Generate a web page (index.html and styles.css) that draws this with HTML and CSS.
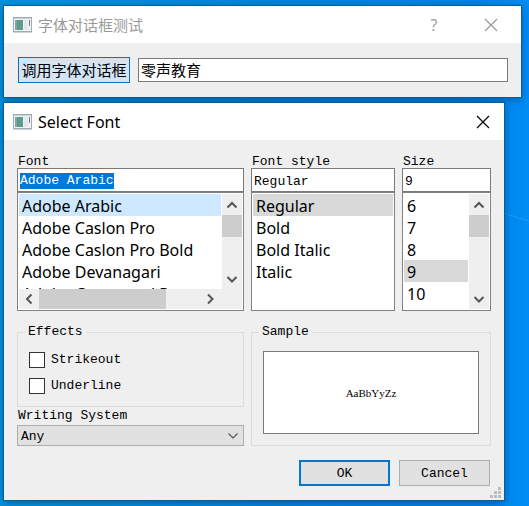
FILE: index.html
```html
<!DOCTYPE html>
<html lang="zh-CN">
<head>
<meta charset="utf-8">
<title>字体对话框测试</title>
<link rel="stylesheet" href="styles.css">
</head>
<body>
<svg class="defs" width="0" height="0" aria-hidden="true">
  <symbol id="app" viewBox="0 0 19 16">
    <rect x="0.5" y="0.5" width="18" height="14" fill="#f1f3f4" stroke="#a3adb1"/>
    <rect x="1" y="1" width="17" height="1" fill="#c3d0d8"/>
    <rect x="2" y="3" width="8" height="10" fill="#5a9d8b"/>
    <rect x="2" y="3" width="2" height="10" fill="#7ba6b0"/>
    <rect x="11" y="3" width="4" height="10" fill="#e4e7ec"/>
    <rect x="16" y="3" width="1" height="6" fill="#6c7e8c"/>
    <rect x="0" y="15" width="19" height="1" fill="#d0d3d5"/>
  </symbol>
  <symbol id="close" viewBox="0 0 14 14"><path d="M1 1l12 12M13 1L1 13" fill="none" stroke="currentColor" stroke-width="1.2"/></symbol>
  <symbol id="up" viewBox="0 0 12 12"><path d="M1.5 8.5L6 4l4.500 4.500" fill="none" stroke="#555" stroke-width="2"/></symbol>
  <symbol id="down" viewBox="0 0 12 12"><path d="M1.500 4L6 8.500 10.500 4" fill="none" stroke="#555" stroke-width="2"/></symbol>
  <symbol id="left" viewBox="0 0 12 12"><path d="M8.500 1.500L4 6l4.500 4.500" fill="none" stroke="#555" stroke-width="2"/></symbol>
  <symbol id="right" viewBox="0 0 12 12"><path d="M4 1.500L8.500 6 4 10.500" fill="none" stroke="#555" stroke-width="2"/></symbol>
</svg>
<main class="desktop">
  <section class="window window-main">
    <header class="titlebar inactive">
      <svg class="app-icon"><use href="#app"/></svg>
      <h1 class="title">字体对话框测试</h1>
      <button class="title-button" aria-label="Help">?</button>
      <button class="title-button" aria-label="Close"><svg class="close-icon"><use href="#close"/></svg></button>
    </header>
    <div class="main-body">
      <button class="button open-button">调用字体对话框</button>
      <input class="field main-field" aria-label="文本" value="零声教育">
    </div>
  </section>

  <section class="window window-font">
    <header class="titlebar">
      <svg class="app-icon"><use href="#app"/></svg>
      <h2 class="title">Select Font</h2>
      <button class="title-button" aria-label="Close"><svg class="close-icon"><use href="#close"/></svg></button>
    </header>
    <div class="font-body">
      <div class="choosers">
        <div class="chooser">
          <label class="caption" for="font">Font</label>
          <div class="field edit"><input id="font" class="selected-text" value="Adobe Arabic" size="12"></div>
          <div class="list both-bars">
            <ul class="items" role="listbox" aria-label="Font">
              <li class="item current" role="option" aria-selected="true">Adobe Arabic</li>
              <li class="item" role="option">Adobe Caslon Pro</li>
              <li class="item" role="option">Adobe Caslon Pro Bold</li>
              <li class="item" role="option">Adobe Devanagari</li>
              <li class="item" role="option">Adobe Garamond Pro</li>
            </ul>
            <div class="vbar">
              <button class="arrow" aria-label="Scroll up"><svg><use href="#up"/></svg></button>
              <div class="thumb"></div>
              <button class="arrow last" aria-label="Scroll down"><svg><use href="#down"/></svg></button>
            </div>
            <div class="hbar">
              <button class="arrow" aria-label="Scroll left"><svg><use href="#left"/></svg></button>
              <div class="track"><div class="thumb"></div></div>
              <button class="arrow" aria-label="Scroll right"><svg><use href="#right"/></svg></button>
            </div>
          </div>
        </div>
        <div class="chooser">
          <label class="caption" for="style">Font style</label>
          <input id="style" class="field" value="Regular">
          <div class="list">
            <ul class="items" role="listbox" aria-label="Font style">
              <li class="item chosen" role="option" aria-selected="true">Regular</li>
              <li class="item" role="option">Bold</li>
              <li class="item" role="option">Bold Italic</li>
              <li class="item" role="option">Italic</li>
            </ul>
          </div>
        </div>
        <div class="chooser">
          <label class="caption" for="size">Size</label>
          <input id="size" class="field" value="9">
          <div class="list one-bar">
            <ul class="items" role="listbox" aria-label="Size">
              <li class="item" role="option">6</li>
              <li class="item" role="option">7</li>
              <li class="item" role="option">8</li>
              <li class="item chosen" role="option" aria-selected="true">9</li>
              <li class="item" role="option">10</li>
            </ul>
            <div class="vbar">
              <button class="arrow" aria-label="Scroll up"><svg><use href="#up"/></svg></button>
              <div class="thumb"></div>
              <button class="arrow last" aria-label="Scroll down"><svg><use href="#down"/></svg></button>
            </div>
          </div>
        </div>
      </div>

      <div class="options">
        <div class="left-options">
          <fieldset class="group effects">
            <legend>Effects</legend>
            <label class="check"><input type="checkbox">Strikeout</label>
            <label class="check"><input type="checkbox">Underline</label>
          </fieldset>
          <label class="caption" for="system">Writing System</label>
          <div class="combo">
            <select id="system"><option>Any</option></select>
            <svg class="combo-arrow" viewBox="0 0 12 8" aria-hidden="true"><path d="M1.500 1.500L6 6l4.500-4.500" fill="none" stroke="#555" stroke-width="1.200"/></svg>
          </div>
        </div>
        <fieldset class="group sample">
          <legend>Sample</legend>
          <div class="preview">AaBbYyZz</div>
        </fieldset>
      </div>

      <div class="actions">
        <button class="button default">OK</button>
        <button class="button">Cancel</button>
      </div>
    </div>
    <svg class="grip" viewBox="0 0 11 11" aria-hidden="true"><path d="M8 0h3v3H8zM4 4h3v3H4zM8 4h3v3H8zM0 8h3v3H0zM4 8h3v3H4zM8 8h3v3H8z" fill="#bdbdbd"/></svg>
  </section>
</main>
</body>
</html>
```

FILE: styles.css
```css
* { box-sizing: border-box; }

body {
  margin: 0;
  color: #000;
  font: 13px/18px "Liberation Mono", "Noto Sans CJK SC", monospace;
}

button, input, select { font: inherit; color: inherit; }
.defs { position: absolute; }

.desktop {
  min-height: 100vh;
  padding: 6px 8px 6px 4px;
  background:
    linear-gradient(198deg, transparent 0 49%, rgb(60 170 255 / 0.6) 50%, transparent 54%) right 205px / 24px 24px no-repeat,
    linear-gradient(90deg, #0093db, #0086dd 50%, #0083e6 90%, #008df5);
}

.window {
  position: relative;
  background: #efefef;
  box-shadow: 0 0 0 1px #075d9a, 0 2px 8px rgb(0 30 80 / 0.5);
}
.window-main { margin-bottom: 6px; }
.window-font { margin-right: 17px; }

.titlebar {
  display: flex;
  align-items: center;
  height: 37px;
  padding-left: 9px;
  background: #fff;
}
.inactive { color: #999; }
.app-icon { width: 19px; height: 16px; }
.title {
  flex: 1;
  margin: 0 0 0 6px;
  font: 400 16px/20px "Noto Sans", sans-serif;
}
.inactive .title { font: 400 15px/20px "Noto Sans CJK SC", sans-serif; }
.title-button {
  display: flex;
  align-items: center;
  justify-content: center;
  width: 42px;
  height: 36px;
  padding: 0;
  border: 0;
  background: none;
  font: 16px/20px "Open Sans", sans-serif;
}
.title-button + .title-button { margin-left: 15px; }
.inactive .title-button:last-child { margin-right: 9px; }
.close-icon { width: 14px; height: 14px; }

.main-body {
  display: flex;
  align-items: center;
  gap: 8px;
  padding: 14px 13px 14px 14px;
}
.button {
  height: 26px;
  padding: 2px 0 0;
  border: 1px solid #adadad;
  background: #e1e1e1;
}
.field {
  display: block;
  width: 100%;
  height: 24px;
  padding: 2px 2px 0;
  border: 1px solid #7a7a7a;
  border-radius: 0;
  background: #fff;
}
.open-button, .main-field {
  padding-top: 0;
  font: 400 15px/20px "Noto Sans CJK SC", sans-serif;
}
.open-button {
  flex: none;
  width: 112px;
  border-color: #0f6fbd;
  background: #d3e4f5;
}
.main-field { flex: 1; min-width: 0; padding-bottom: 2px; }

.font-body { padding: 13px 13px 14px; }
.choosers {
  display: grid;
  grid-template-columns: 227fr 144fr 89fr;
  gap: 7px;
}
.chooser { min-width: 0; }
.caption { display: block; height: 15px; padding-left: 1px; }
.edit { display: flex; align-items: center; }
.selected-text {
  width: 12ch;
  height: 16px;
  padding: 0;
  border: 0;
  background: #0078d7;
  color: #fff;
}

.list {
  display: grid;
  grid-template-columns: minmax(0, 1fr);
  grid-template-rows: minmax(0, 1fr);
  column-gap: 1px;
  height: 119px;
  padding: 1px;
  border: 1px solid #828282;
  background: #fff;
}
.one-bar, .both-bars { grid-template-columns: minmax(0, 1fr) 20px; }
.both-bars { grid-template-rows: minmax(0, 1fr) 20px; }
.items {
  margin: 0;
  padding: 0;
  overflow: hidden;
  list-style: none;
  font: 16px/24px "Noto Sans", sans-serif;
}
.item { height: 22px; padding-left: 3px; white-space: nowrap; }
.current { background: #cde8ff; }
.chosen { background: #d9d9d9; }

.vbar, .hbar { display: flex; background: #efefef; }
.vbar { flex-direction: column; }
.hbar { grid-column: 1 / -1; padding-right: 22px; }
.arrow {
  display: flex;
  flex: none;
  align-items: center;
  justify-content: center;
  width: 20px;
  height: 21px;
  padding: 0;
  border: 0;
  background: none;
}
.arrow svg { width: 12px; height: 12px; }
.last { margin-top: auto; }
.thumb { background: #cdcdcd; }
.vbar .thumb { height: 22px; }
.hbar .arrow { height: 20px; }
.track { flex: 1; }
.track .thumb { width: 79%; height: 100%; }

.options {
  display: grid;
  grid-template-columns: 227fr 240fr;
  gap: 7px;
  margin-top: 11px;
}
.group {
  min-width: 0;
  margin: 0;
  padding: 0 11px;
  border: 1px solid #dcdcdc;
}
.group legend { margin-left: -4px; padding: 0 3px; line-height: 20px; }
.effects { height: 85px; }
.check { display: flex; align-items: center; gap: 6px; height: 26px; }
.effects legend + .check { margin-top: 5px; }
.check input {
  width: 16px;
  height: 16px;
  margin: 0;
  border: 1px solid #333;
  background: #fff;
  appearance: none;
}
.left-options .caption { height: 18px; }
.combo { position: relative; }
.combo select {
  display: block;
  width: 100%;
  height: 21px;
  padding: 2px 3px 0;
  border: 1px solid #adadad;
  border-radius: 0;
  background: #e1e1e1;
  appearance: none;
}
.combo-arrow {
  position: absolute;
  top: 7px;
  right: 5px;
  width: 12px;
  height: 8px;
  pointer-events: none;
}
.preview {
  display: flex;
  align-items: center;
  justify-content: center;
  height: 83px;
  margin: 9px 0 11px;
  border: 1px solid #7a7a7a;
  background: #fff;
  font: 11px/14px "Liberation Serif", serif;
}

.actions {
  display: flex;
  justify-content: flex-end;
  gap: 9px;
  margin: 14px 1px 0 0;
}
.actions .button { width: 91px; }
.actions .default { border: 2px solid #0078d7; }
.grip {
  position: absolute;
  right: 3px;
  bottom: 2px;
  width: 11px;
  height: 11px;
}
```
